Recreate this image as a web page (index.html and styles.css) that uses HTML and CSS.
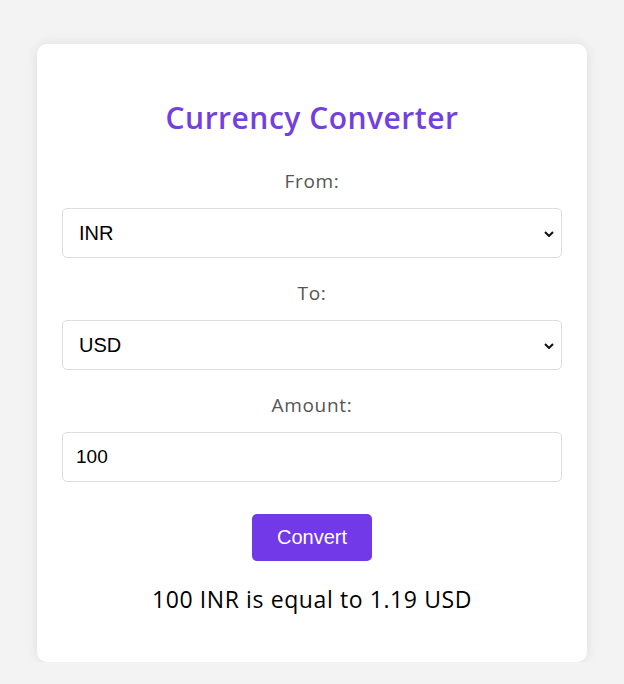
FILE: index.html
```html
<!DOCTYPE html>
<html lang="en">
<head>
<meta charset="utf-8">
<title>Currency Converter</title>
<link rel="stylesheet" href="styles.css">
</head>
<body>
<main class="card">
  <h1 class="title">Currency Converter</h1>
  <label class="label" for="from">From:</label>
  <div class="select-wrap">
    <select id="from" class="field select">
      <option>INR</option>
      <option>USD</option>
    </select>
    <svg class="chevron" width="10" height="6" viewBox="0 0 10 6" aria-hidden="true"><path d="M1 1 L5 5 L9 1" fill="none" stroke="#111" stroke-width="2"/></svg>
  </div>
  <label class="label" for="to">To:</label>
  <div class="select-wrap">
    <select id="to" class="field select">
      <option>USD</option>
      <option>INR</option>
    </select>
    <svg class="chevron" width="10" height="6" viewBox="0 0 10 6" aria-hidden="true"><path d="M1 1 L5 5 L9 1" fill="none" stroke="#111" stroke-width="2"/></svg>
  </div>
  <label class="label" for="amount">Amount:</label>
  <input id="amount" class="field input" type="text" value="100">
  <button class="btn" type="button">Convert</button>
  <p class="result">100 INR is equal to 1.19 USD</p>
</main>
</body>
</html>
```
FILE: styles.css
```css
html, body {
  margin: 0;
  padding: 0;
}
body {
  background: #f3f3f3;
  font-family: "Open Sans", "Liberation Sans", sans-serif;
  display: flex;
  justify-content: center;
  padding-top: 44px;
}
.card {
  width: 550px;
  box-sizing: border-box;
  background: #fff;
  border-radius: 10px;
  box-shadow: 0 0 12px rgba(0, 0, 0, 0.09);
  padding: 52px 25px 47px;
  display: flex;
  flex-direction: column;
  align-items: center;
}
.title {
  margin: 0 0 28px;
  font-size: 30px;
  font-weight: 600;
  letter-spacing: 0.5px;
  color: #7340e0;
  line-height: 44px;
}
.label {
  font-size: 19px;
  letter-spacing: 0.7px;
  color: #555;
  line-height: 26px;
  margin-bottom: 14px;
}
.select-wrap {
  position: relative;
  width: 100%;
  margin-bottom: 22px;
}
.chevron {
  position: absolute;
  right: 8px;
  top: 23px;
  pointer-events: none;
}
.field {
  display: block;
  width: 100%;
  height: 50px;
  box-sizing: border-box;
  border: 1px solid #ddd;
  border-radius: 5px;
  background: #fff;
  font-family: "Liberation Sans", Arial, sans-serif;
  font-size: 20px;
  color: #000;
  padding: 0 20px 0 16px;
}
.select {
  appearance: none;
  -webkit-appearance: none;
  outline: none;
}
.input {
  font-size: 19px;
  padding-left: 13px;
  margin-bottom: 32px;
  outline: none;
}
.btn {
  width: 120px;
  height: 47px;
  border: none;
  border-radius: 5px;
  background: #7139e8;
  color: #fff;
  font-family: "Liberation Sans", Arial, sans-serif;
  font-size: 20px;
  margin-bottom: 22px;
}
.result {
  margin: 0;
  font-size: 23px;
  letter-spacing: 0.6px;
  line-height: 32px;
  color: #000;
}
```
